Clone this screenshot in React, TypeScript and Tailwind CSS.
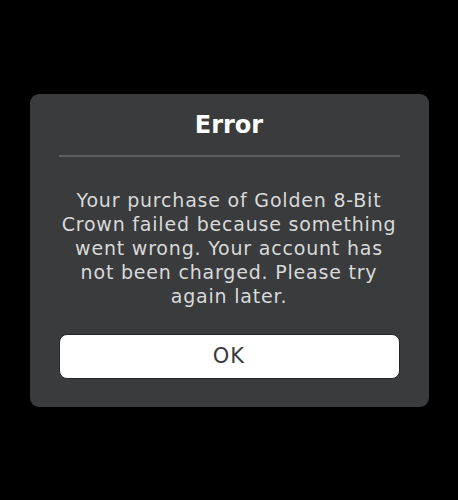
import React from "react";

export default function App() {
  return (
    <div className="w-[458px] h-[500px] bg-black flex items-center justify-center" style={{ fontFamily: '"DejaVu Sans", "Noto Sans", sans-serif' }}>
      <div className="w-[399px] h-[313px] bg-[#393b3d] rounded-[9px] px-[29px] flex flex-col">
        <div className="h-[61px] flex items-center justify-center pt-[2px]">
          <h1 className="text-white text-[24px] font-bold leading-none">Error</h1>
        </div>
        <div className="h-[2px] bg-[#5c5e60]" />
        <p className="mt-[31px] text-[#d9d9d9] text-[19px] leading-[24px] tracking-[0.8px] text-center whitespace-nowrap">
          Your purchase of Golden 8-Bit<br />
          Crown failed because something<br />
          went wrong. Your account has<br />
          not been charged. Please try<br />
          again later.
        </p>
        <button className="mt-[26px] h-[45px] w-full bg-white rounded-[8px] border border-[#232527] text-[#393b3d] text-[21px] tracking-[1px] leading-none flex items-center justify-center">
          OK
        </button>
      </div>
    </div>
  );
}
